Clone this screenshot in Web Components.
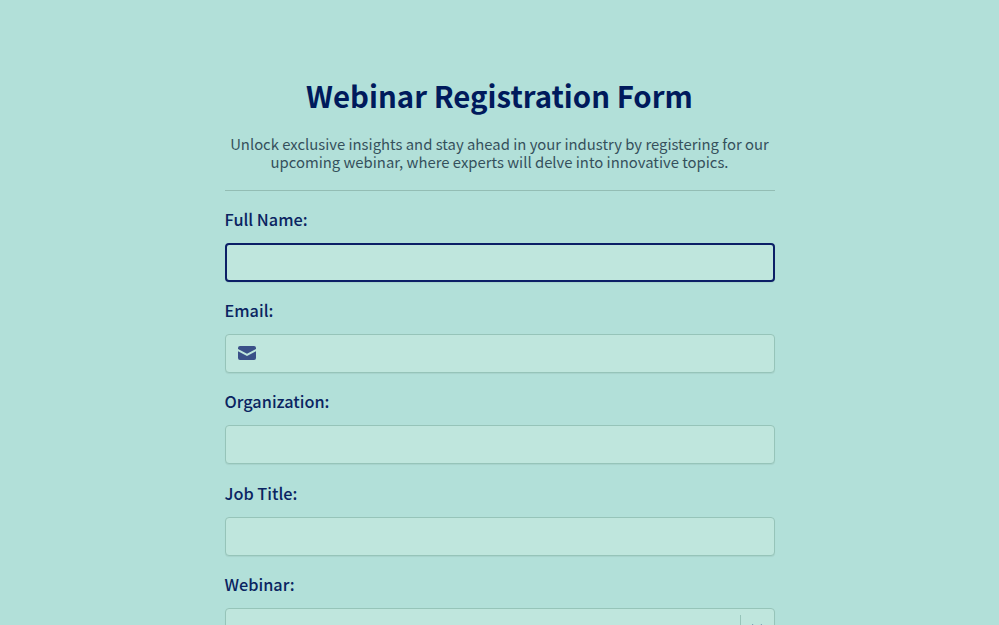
<!doctype html>
<html>
<head>
<meta charset="utf-8">
<style>
  html, body { margin: 0; height: 100%; overflow: hidden; background: #b2e0d9; }
  body { font-family: "Noto Sans CJK SC", "Noto Sans", sans-serif; }
</style>
</head>
<body>
<webinar-form>
  <form-field label="Full Name:" focused></form-field>
  <form-field label="Email:" icon="mail"></form-field>
  <form-field label="Organization:"></form-field>
  <form-field label="Job Title:"></form-field>
  <form-field label="Webinar:" type="select"></form-field>
</webinar-form>
<script>
class WebinarForm extends HTMLElement {
  constructor() {
    super();
    this.attachShadow({ mode: "open" });
    this.shadowRoot.innerHTML = `
    <style>
      :host { display: block; width: 550px; margin: 0 auto; padding-top: 74px; }
      h1 { margin: 0; font-size: 29.400px; line-height: 42px; font-weight: 700; color: #001a5c; text-align: center; }
      p { margin: 19px 0 0; font-size: 14.850px; line-height: 18px; color: #35505c; text-align: center; }
      hr { margin: 19px 0 0; border: 0; border-top: 1px solid #93bdb4; }
      .fields { display: flex; flex-direction: column; gap: 16.250px; padding-top: 15.800px; }
    </style>
    <h1>Webinar Registration Form</h1>
    <p>Unlock exclusive insights and stay ahead in your industry by registering for our upcoming webinar, where experts will delve into innovative topics.</p>
    <hr>
    <div class="fields"><slot></slot></div>`;
  }
}
class FormField extends HTMLElement {
  constructor() {
    super();
    this.attachShadow({ mode: "open" });
  }
  connectedCallback() {
    const isFocused = this.hasAttribute("focused");
    const icon = this.getAttribute("icon") === "mail"
      ? `<svg class="icon" viewBox="0 0 18 14"><path fill="#3a5088" d="M2 0h14a2 2 0 0 1 2 2v1L9 7.800 0 3V2a2 2 0 0 1 2-2zM0 5.200L9 10l9-4.800V12a2 2 0 0 1-2 2H2a2 2 0 0 1-2-2z"/></svg>`
      : "";
    const arrow = this.getAttribute("type") === "select"
      ? `<span class="arrow"><svg viewBox="0 0 12 8" width="12" height="8"><path fill="none" stroke="#3a5088" stroke-width="2" d="M1 1l5 5 5-5"/></svg></span>`
      : "";
    this.shadowRoot.innerHTML = `
    <style>
      :host { display: block; }
      label { display: block; font-size: 16.300px; line-height: 24px; font-weight: 500; color: #0a2461; margin-bottom: 12px; }
      .box { box-sizing: border-box; height: 39px; display: flex; align-items: center; justify-content: space-between;
        background: #bfe6dd; border: 1px solid #96c4b9; border-radius: 4px; box-shadow: 0 1px 1px rgba(0,0,0,.06); }
      .box.focused { border: 2px solid #0b1f66; }
      .icon { width: 18px; height: 14px; margin: 0 0 1px 12px; }
      .arrow { box-sizing: border-box; align-self: flex-start; margin: 6px 0 0 auto; padding-top: 9px; width: 34px; height: 27px;
        border-left: 1px solid #96c4b9; display: flex; justify-content: center; }
    </style>
    <label>${this.getAttribute("label")}</label>
    <div class="box ${isFocused ? "focused" : ""}">${icon}${arrow}</div>`;
  }
}
customElements.define("webinar-form", WebinarForm);
customElements.define("form-field", FormField);
</script>
</body>
</html>
